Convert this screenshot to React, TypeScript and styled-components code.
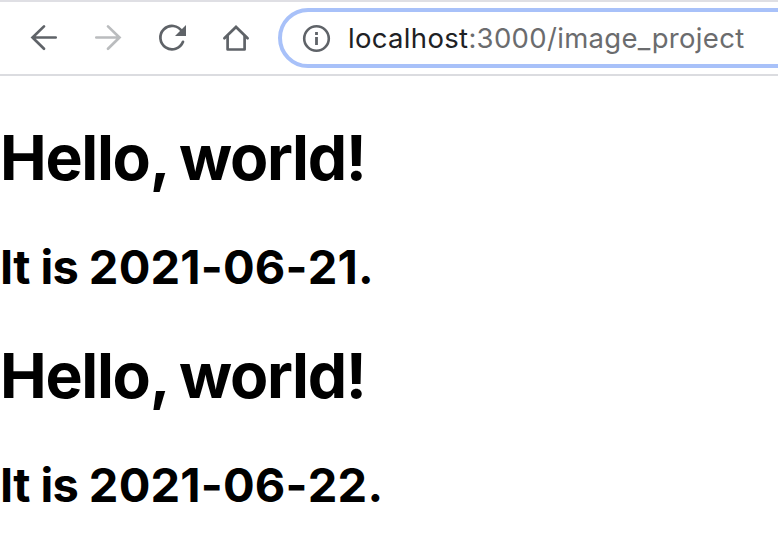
import React from "react";
import styled, { createGlobalStyle } from "styled-components";

const GlobalStyle = createGlobalStyle`
  * { box-sizing: border-box; }
  body { margin: 0; background: #fff; overflow: hidden; }
`;

const Window = styled.div`
  width: 778px;
  height: 558px;
  overflow: hidden;
  background: #fff;
`;

const Toolbar = styled.header`
  display: flex;
  align-items: center;
  height: 76px;
  border-top: 2px solid #dfdfe4;
  border-bottom: 2px solid #dbdce0;
  padding-left: 28px;
`;

const NavButton = styled.button<{ $disabled?: boolean }>`
  flex: none;
  width: 32px;
  height: 32px;
  margin-right: 32px;
  padding: 0;
  border: 0;
  background: none;
  color: ${(p) => (p.$disabled ? "#babcbe" : "#5f6368")};
  svg { display: block; }
`;

const AddressBar = styled.div`
  flex: none;
  display: flex;
  align-items: center;
  width: 540px;
  height: 60px;
  margin-left: -6px;
  padding-left: 18px;
  border: 4px solid #a8c1f9;
  border-radius: 30px;
  color: #5f6368;
`;

const Url = styled.span`
  margin-left: 16px;
  font: 27.5px/36px Inter, sans-serif;
  letter-spacing: 0.32px;
  color: #6b6c6e;
  white-space: nowrap;
`;

const Host = styled.span`
  color: #202124;
`;

const Page = styled.main`
  padding-top: 43px;
  font-family: Inter, sans-serif;
  color: #000;
`;

const Title = styled.h1`
  margin: 0;
  height: 76px;
  font-size: 62.5px;
  line-height: 76px;
  letter-spacing: -1.3px;
  word-spacing: -1.8px;
  font-weight: 700;
  white-space: nowrap;
`;

const Subtitle = styled.h2`
  margin: 43px 0 41px;
  height: 58px;
  font-size: 47px;
  line-height: 58px;
  letter-spacing: -0.6px;
  font-weight: 700;
  white-space: nowrap;
`;

const DateText = styled.span`
  letter-spacing: 0.2px;
  font-kerning: none;
`;

const Icon = ({ children }: { children: React.ReactNode }) => (
  <svg
    width="32"
    height="32"
    viewBox="0 0 32 32"
    fill="none"
    stroke="currentColor"
    strokeWidth="2.7"
    strokeLinecap="round"
  >
    {children}
  </svg>
);

const dates = ["2021-06-21", "2021-06-22"];

export default function App() {
  return (
    <Window>
      <GlobalStyle />
      <Toolbar>
        <NavButton aria-label="Back">
          <Icon><path d="M27.7 15.5H4.5M16 4.4L4.5 15.5 16 26.7" /></Icon>
        </NavButton>
        <NavButton aria-label="Forward" $disabled>
          <Icon><path d="M4.3 15.5h23.2M16 4.4l11.5 11.1L16 26.7" /></Icon>
        </NavButton>
        <NavButton aria-label="Reload">
          <Icon>
            <path d="M26 9.4A11.7 11.7 0 1 0 27 19.8" />
            <path d="M30 3v11H19z" fill="currentColor" stroke="none" />
          </Icon>
        </NavButton>
        <NavButton aria-label="Home">
          <Icon>
            <path d="M4.4 16.3L16 5l11.6 11.3" strokeLinejoin="miter" />
            <path d="M7.6 14v13.5h17V14" strokeLinejoin="round" />
          </Icon>
        </NavButton>
        <AddressBar>
          <Icon>
            <circle cx="16.5" cy="16.5" r="12.3" strokeWidth="2.6" />
            <path d="M16.5 15v8M16.5 10v3" strokeLinecap="butt" strokeWidth="2.8" />
          </Icon>
          <Url><Host>localhost</Host>:3000/image_project</Url>
        </AddressBar>
      </Toolbar>
      <Page>
        {dates.map((date) => (
          <section key={date}>
            <Title>Hello, world!</Title>
            <Subtitle>It is <DateText>{date}.</DateText></Subtitle>
          </section>
        ))}
      </Page>
    </Window>
  );
}
